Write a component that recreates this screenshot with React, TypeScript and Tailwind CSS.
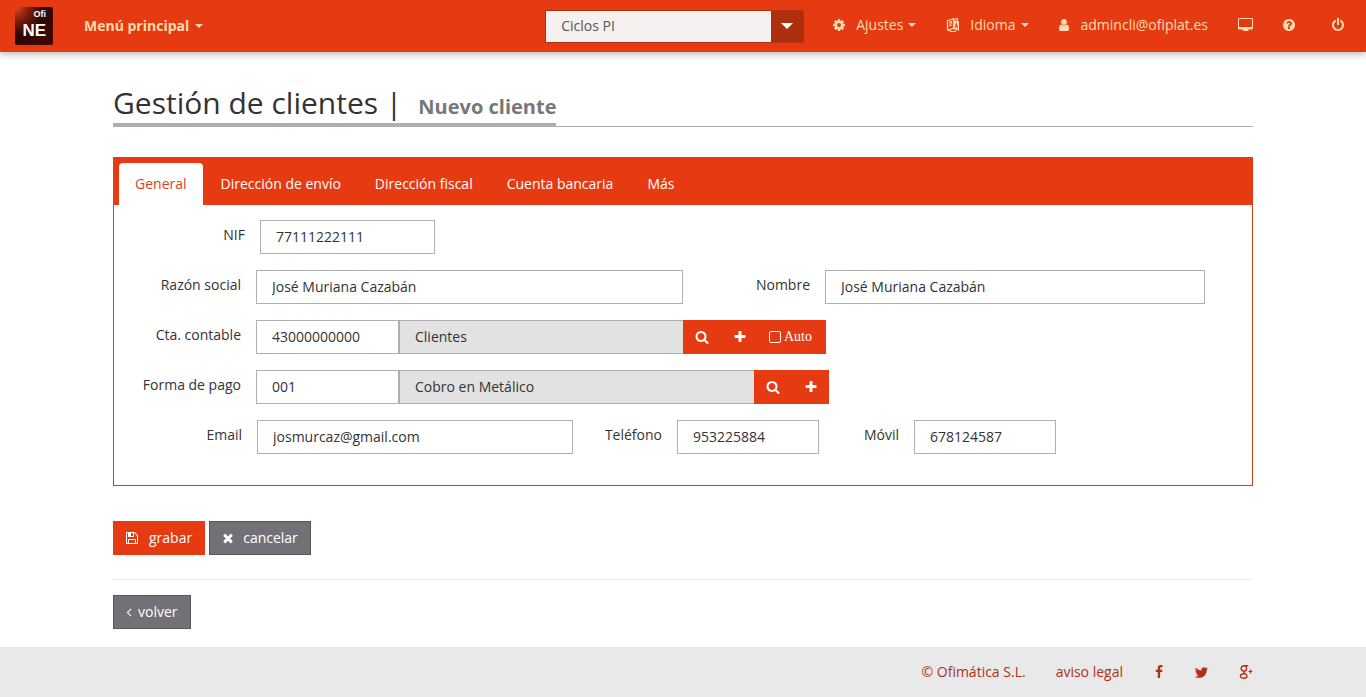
import React from 'react';

// 1792 x 1792 glyphs shared by the toolbar, the buttons and the footer
const ICONS = {
  cog: 'M1152 896q0-106-75-181t-181-75-181 75-75 181 75 181 181 75 181-75 75-181zm512-109v222q0 12-8 23t-20 13l-185 28q-19 54-39 91 35 50 107 138 10 12 10 25t-9 23q-27 37-99 108t-94 71q-12 0-26-9l-138-108q-44 23-91 38-16 136-29 186-7 28-36 28h-222q-14 0-24.5-8.5t-11.5-21.5l-28-184q-49-16-90-37l-141 107q-10 9-25 9-14 0-25-11-126-114-165-168-7-10-7-23 0-12 8-23 15-21 51-66.5t54-70.5q-27-50-41-99l-183-27q-13-2-21-12.5t-8-23.5v-222q0-12 8-23t19-13l186-28q14-46 39-92-40-57-107-138-10-12-10-24 0-10 9-23 26-36 98.5-107.5t94.5-71.5q13 0 26 10l138 107q44-23 91-38 16-136 29-186 7-28 36-28h222q14 0 24.5 8.5t11.5 21.5l28 184q49 16 90 37l142-107q9-9 24-9 13 0 25 10 129 119 165 170 7 8 7 22 0 12-8 23-15 21-51 66.5t-54 70.5q26 50 41 98l183 28q13 2 21 12.5t8 23.5z',
  user: 'M1536 1399q0 109-62.5 187t-150.5 78h-854q-88 0-150.5-78t-62.5-187q0-85 8.5-160.5t31.5-152 58.5-131 94-89 134.5-34.5q131 128 313 128t313-128q76 0 134.5 34.5t94 89 58.5 131 31.5 152 8.5 160.5zm-256-887q0 159-112.5 271.5t-271.5 112.5-271.5-112.5-112.5-271.5 112.5-271.5 271.5-112.5 271.5 112.5 112.5 271.5z',
  help: 'M1024 1376v-192q0-14-9-23t-23-9h-192q-14 0-23 9t-9 23v192q0 14 9 23t23 9h192q14 0 23-9t9-23zm256-672q0-88-55.5-163t-138.5-116-170-41q-243 0-371 213-15 24 8 42l132 100q7 6 19 6 16 0 25-12 53-68 86-92 34-24 86-24 48 0 85.5 26t37.5 59q0 38-20 61t-68 45q-63 28-115.5 86.5t-52.5 125.5v36q0 14 9 23t23 9h192q14 0 23-9t9-23q0-19 21.5-49.5t54.5-49.5q32-18 49-28.5t46-35 44.5-48 28-60.5 12.5-81zm384 192q0 209-103 385.5t-279.5 279.5-385.5 103-385.5-103-279.5-279.5-103-385.5 103-385.5 279.5-279.5 385.5-103 385.5 103 279.5 279.5 103 385.5z',
  power: 'M1664 896q0 156-61 298t-164 245-245 164-298 61-298-61-245-164-164-245-61-298q0-182 80.5-343t226.5-270q43-32 95.5-25t83.5 50q32 42 24.5 94.5t-49.5 84.5q-98 74-151.5 181t-53.5 228q0 104 40.5 198.5t109.5 163.5 163.5 109.5 198.5 40.5 198.5-40.5 163.5-109.5 109.5-163.5 40.5-198.5q0-121-53.5-228t-151.5-181q-42-32-49.5-84.5t24.5-94.5q31-43 84-50t95 25q146 109 226.5 270t80.5 343zm-640-768v640q0 52-38 90t-90 38-90-38-38-90v-640q0-52 38-90t90-38 90 38 38 90z',
  search: 'M1216 832q0-185-131.5-316.5t-316.5-131.5-316.5 131.5-131.5 316.5 131.5 316.5 316.5 131.5 316.5-131.5 131.5-316.5zm512 832q0 52-38 90t-90 38q-54 0-90-38l-343-342q-179 124-399 124-143 0-273.5-55.5t-225-150-150-225-55.5-273.5 55.5-273.5 150-225 225-150 273.5-55.5 273.5 55.5 225 150 150 225 55.5 273.5q0 220-124 399l343 343q37 37 37 90z',
  plus: 'M1600 736v192q0 40-28 68t-68 28h-416v416q0 40-28 68t-68 28h-192q-40 0-68-28t-28-68v-416h-416q-40 0-68-28t-28-68v-192q0-40 28-68t68-28h416v-416q0-40 28-68t68-28h192q40 0 68 28t28 68v416h416q40 0 68 28t28 68z',
  times: 'M1490 1322q0 40-28 68l-136 136q-28 28-68 28t-68-28l-294-294-294 294q-28 28-68 28t-68-28l-136-136q-28-28-28-68t28-68l294-294-294-294q-28-28-28-68t28-68l136-136q28-28 68-28t68 28l294 294 294-294q28-28 68-28t68 28l136 136q28 28 28 68t-28 68l-294 294 294 294q28 28 28 68z',
  save: 'M512 1536h768v-384h-768v384zm896 0h128v-896q0-14-10-38.5t-20-34.5l-281-281q-10-10-34-20t-39-10v416q0 40-28 68t-68 28h-576q-40 0-68-28t-28-68v-416h-128v1280h128v-416q0-40 28-68t68-28h832q40 0 68 28t28 68v416zm-384-928v-320q0-13-9.5-22.5t-22.5-9.5h-192q-13 0-22.5 9.5t-9.5 22.5v320q0 13 9.5 22.5t22.5 9.5h192q13 0 22.5-9.5t9.5-22.5zm640 32v928q0 40-28 68t-68 28h-1344q-40 0-68-28t-28-68v-1344q0-40 28-68t68-28h928q40 0 88 20t76 48l280 280q28 28 48 76t20 88z',
  angleLeft: 'M1203 544q0 13-10 23l-393 393 393 393q10 10 10 23t-10 23l-50 50q-10 10-23 10t-23-10l-466-466q-10-10-10-23t10-23l466-466q10-10 23-10t23 10l50 50q10 10 10 23z',
  facebook: 'M1343 12v264h-157q-86 0-116 36t-30 108v189h293l-39 296h-254v759h-306v-759h-255v-296h255v-218q0-186 104-288.5t277-102.5q147 0 228 12z',
  twitter: 'M1684 408q-67 98-162 167 1 14 1 42 0 130-38 259.5t-115.5 248.5-184.5 210.5-258 146-323 54.5q-271 0-496-145 35 4 78 4 225 0 401-138-105-2-188-64.5t-114-159.5q33 5 61 5 43 0 85-11-112-23-185.5-111.5t-73.5-205.5v-4q68 38 146 41-66-44-105-115t-39-154q0-88 44-163 121 149 294.5 238.5t371.5 99.5q-8-38-8-74 0-134 94.5-228.5t228.5-94.5q140 0 236 102 109-21 205-78-37 115-142 178 93-10 186-50z',
};

const Icon: React.FC<{ name: keyof typeof ICONS; className?: string }> = ({ name, className = 'size-[14px]' }) => (
  <svg viewBox="0 0 1792 1792" fill="currentColor" className={`shrink-0 ${className}`} aria-hidden="true">
    <path d={ICONS[name]} />
  </svg>
);

const Caret: React.FC<{ className?: string }> = ({ className = 'w-2 h-1' }) => (
  <svg viewBox="0 0 8 4" fill="currentColor" className={`shrink-0 ${className}`} aria-hidden="true">
    <path d="M0 0h8L4 4z" />
  </svg>
);

const LanguageIcon = () => (
  <svg viewBox="0 0 14 14" fill="none" stroke="currentColor" className="size-[14px] shrink-0" aria-hidden="true">
    <path d="M1.5 2.5 7.5.8v9.4l-6 2zM8 1.5l3.500-1v3M3 12.500c2 1.200 5 1.400 7 .4" strokeWidth="1.200" />
    <path d="M2.800 4.500 6 3.600M4.500 3v1.200M5.600 4c-.4 2-1.400 3.400-2.800 4.600M3.200 5.800 6 8" />
    <path fill="currentColor" fillRule="evenodd" stroke="none" d="M7.500 2.300 13 3.500v9.200l-5.500-2zM10 5 8.500 9.800l.9.300.3-1.200 1.300.4.300 1.300.9.300L11 5.300zm.4 1.500.4 1.800-.8-.3z" />
  </svg>
);

const DesktopIcon = () => (
  <svg viewBox="0 0 16 14" fill="currentColor" className="h-[14px] w-4 shrink-0" aria-hidden="true">
    <path fillRule="evenodd" d="M1 0h13q1 0 1 1v9.500q0 1-1 1h-4v1h1V13H4.500v-.5h1v-1H1q-1 0-1-1V1q0-1 1-1zm0 1v8h13V1z" />
  </svg>
);

const GooglePlusIcon = () => (
  <svg viewBox="0 0 14 14" fill="none" stroke="currentColor" className="size-[14px] shrink-0" aria-hidden="true">
    <path d="M9.200.8H5.300C3.400.8 2.200 2.100 2.200 3.600c0 1.500 1.100 2.500 2.600 2.500 1.600 0 2.700-1.100 2.700-2.700C7.500 2.200 6.900 1.300 6 .8M5.200 6.300c-.6.700-.5 1.200.3 1.800 1.500 1 2.500 1.600 2.500 2.900 0 1.400-1.400 2.300-3.300 2.300S1.400 12.500 1.400 11.100c0-1.500 1.800-2.300 4.400-2.300" strokeWidth="1.400" />
    <path d="M11.500 4.500v4M9.500 6.500h4" strokeWidth="1.200" />
  </svg>
);

const Logo = () => (
  <svg viewBox="0 0 38 38" className="size-[38px]" role="img" aria-label="Ofi NE">
    <defs>
      <radialGradient id="logo-bg" cx="0" cy="0" r="1.1">
        <stop offset="0" stopColor="#e04a24" />
        <stop offset="0.35" stopColor="#7a1d0a" />
        <stop offset="0.7" stopColor="#2a0603" />
        <stop offset="1" stopColor="#3c0a04" />
      </radialGradient>
    </defs>
    <rect width="38" height="38" rx="2" fill="url(#logo-bg)" />
    <text x="31" y="10" textAnchor="end" fontFamily="Liberation Sans, sans-serif" fontSize="9" fontWeight="bold" fill="#fff">Ofi</text>
    <text x="31" y="29" textAnchor="end" fontFamily="Liberation Sans, sans-serif" fontSize="17" fontWeight="bold" fill="#fff">NE</text>
  </svg>
);

const TABS = ['General', 'Dirección de envío', 'Dirección fiscal', 'Cuenta bancaria', 'Más'];

interface FieldProps {
  id: string;
  label: string;
  value: string;
  labelClass: string;
  inputClass: string;
}

const inputBase = 'h-[34px] min-w-0 border border-[#aeb0b0] bg-white px-[15px] pb-[2px] text-[#333] outline-none';

const Field: React.FC<FieldProps> = ({ id, label, value, labelClass, inputClass }) => (
  <>
    <label htmlFor={id} className={`h-[30px] shrink-0 pr-[15px] text-right leading-[30px] ${labelClass}`}>{label}</label>
    <input id={id} type="text" defaultValue={value} className={`${inputBase} ${inputClass}`} />
  </>
);

interface LookupProps {
  id: string;
  label: string;
  code: string;
  name: string;
  groupClass: string;
  children?: React.ReactNode;
}

const Lookup: React.FC<LookupProps> = ({ id, label, code, name, groupClass, children }) => (
  <div className="flex">
    <Field id={id} label={label} value={code} labelClass="w-[142px]" inputClass="w-[143px]" />
    <div className={`flex min-w-0 flex-1 ${groupClass}`}>
      <input
        type="text"
        readOnly
        aria-label={`${label} descripción`}
        defaultValue={name}
        className="h-[34px] min-w-0 flex-1 border-y border-l border-[#aeb0b0] bg-[#e2e2e2] px-[15px] pb-[2px] text-[#333] outline-none"
      />
      <div className="flex bg-[#e63a12] text-white">
        <button type="button" aria-label={`Buscar ${label}`} className="flex w-[38px] items-center justify-center">
          <Icon name="search" />
        </button>
        <button type="button" aria-label={`Añadir ${label}`} className="flex w-[37px] items-center justify-center">
          <Icon name="plus" />
        </button>
        {children}
      </div>
    </div>
  </div>
);

const Header = () => (
  <header className="flex h-[52px] items-center bg-[#e63a12] pl-[15px] text-[#ffdcae] shadow-[0_2px_7px_rgba(0,0,0,0.3)]">
    <Logo />
    <button type="button" className="ml-[31px] flex items-center gap-[6px] font-bold">
      Menú principal <Caret />
    </button>
    <div className="relative ml-auto flex h-[33px] w-[259px] border border-[#b3310f] text-[#555]">
      <select aria-label="Ejercicio" className="w-full appearance-none bg-[#f6f0f0] pl-[15px] outline-none">
        <option>Ciclos PI</option>
      </select>
      <span className="pointer-events-none absolute inset-y-0 right-0 flex w-8 items-center justify-center bg-[#ae2f0e] text-white">
        <Caret className="h-[6px] w-3" />
      </span>
    </div>
    <nav className="flex items-center pr-[21px] pb-[2px]">
      <button type="button" className="ml-7 flex items-center">
        <Icon name="cog" />
        <span className="mr-[5px] ml-[10px]">Ajustes</span>
        <Caret />
      </button>
      <button type="button" className="ml-[30px] flex items-center">
        <LanguageIcon />
        <span className="mr-[5px] ml-[10px]">Idioma</span>
        <Caret />
      </button>
      <a href="#cuenta" className="ml-7 flex items-center gap-[10px]">
        <Icon name="user" />
        admincli@ofiplat.es
      </a>
      <button type="button" aria-label="Escritorio" className="ml-[30px]"><DesktopIcon /></button>
      <button type="button" aria-label="Ayuda" className="ml-7"><Icon name="help" /></button>
      <button type="button" aria-label="Salir" className="ml-[35px]"><Icon name="power" /></button>
    </nav>
  </header>
);

const GeneralForm = () => (
  <form className="space-y-4 border-x border-b border-[#c9431f] pt-[15px] pb-[31px]">
    <div className="flex">
      <Field id="nif" label="NIF" value="77111222111" labelClass="w-[146px]" inputClass="w-[175px]" />
    </div>
    <div className="flex pr-[47px]">
      <Field id="razon" label="Razón social" value="José Muriana Cazabán" labelClass="w-[142px]" inputClass="w-[427px]" />
      <Field id="nombre" label="Nombre" value="José Muriana Cazabán" labelClass="w-[142px]" inputClass="flex-1" />
    </div>
    <Lookup id="cuenta" label="Cta. contable" code="43000000000" name="Clientes" groupClass="max-w-[427px]">
      <label className="flex items-center gap-[3px] pr-[14px] pl-[11px] font-['Liberation_Serif',serif]">
        <input type="checkbox" className="size-3 appearance-none rounded-[2px] border border-white" />
        Auto
      </label>
    </Lookup>
    <Lookup id="pago" label="Forma de pago" code="001" name="Cobro en Metálico" groupClass="max-w-[430px]" />
    <div className="flex">
      <Field id="email" label="Email" value="josmurcaz@gmail.com" labelClass="w-[143px]" inputClass="w-[316px]" />
      <Field id="telefono" label="Teléfono" value="953225884" labelClass="w-[104px]" inputClass="w-[142px]" />
      <Field id="movil" label="Móvil" value="678124587" labelClass="w-[95px]" inputClass="w-[142px]" />
    </div>
  </form>
);

const greyButton = 'flex h-[34px] items-center border border-[#55555a] bg-[#727177] px-3 text-white';

export default function App() {
  return (
    <div className="flex min-h-screen flex-col bg-white font-['Open_Sans',sans-serif] text-[14px] leading-5 text-[#333]">
      <Header />

      <main className="mx-auto w-full max-w-[1140px] pt-[34px] pb-[18px]">
        <div className="flex border-b border-[#aeb0b0]">
          <h1 className="-mb-px border-b-4 border-[#aeb0b0] pb-1 text-[30px] leading-[33px]">
            Gestión de clientes |
            <small className="ml-4 text-[20px] leading-none font-bold text-[#777]">Nuevo cliente</small>
          </h1>
        </div>

        <section className="mt-[30px]">
          <div role="tablist" className="flex gap-[2px] bg-[#e63a12] pt-[6px] pl-[6px]">
            {TABS.map((tab, i) => (
              <button
                key={tab}
                type="button"
                role="tab"
                aria-selected={i === 0}
                className={`h-[42px] rounded-t px-4 ${i === 0 ? 'bg-white text-[#e0401f]' : 'text-white'}`}
              >
                {tab}
              </button>
            ))}
          </div>
          <GeneralForm />
        </section>

        <div className="mt-[35px] flex gap-1">
          <button type="button" className="flex h-[34px] items-center gap-[10px] bg-[#e63a12] pr-[13px] pl-3 text-white">
            <Icon name="save" /> grabar
          </button>
          <button type="button" className={`${greyButton} gap-2`}>
            <Icon name="times" className="-ml-px size-[14px]" /> cancelar
          </button>
        </div>

        <hr className="mt-6 mb-[15px] border-[#eee]" />

        <button type="button" className={`${greyButton} gap-[6px]`}>
          <Icon name="angleLeft" className="-mx-1 size-[14px]" /> volver
        </button>
      </main>

      <footer className="mt-auto bg-[#e9e9e9] text-[#b0301a]">
        <div className="mx-auto flex h-[50px] w-full max-w-[1140px] items-center justify-end">
          <span>© Ofimática S.L.</span>
          <a href="#legal" className="ml-[30px]">aviso legal</a>
          <a href="#facebook" aria-label="Facebook" className="ml-[29px]"><Icon name="facebook" /></a>
          <a href="#twitter" aria-label="Twitter" className="ml-7"><Icon name="twitter" className="size-[15px]" /></a>
          <a href="#google" aria-label="Google+" className="ml-[30px]"><GooglePlusIcon /></a>
        </div>
      </footer>
    </div>
  );
}
